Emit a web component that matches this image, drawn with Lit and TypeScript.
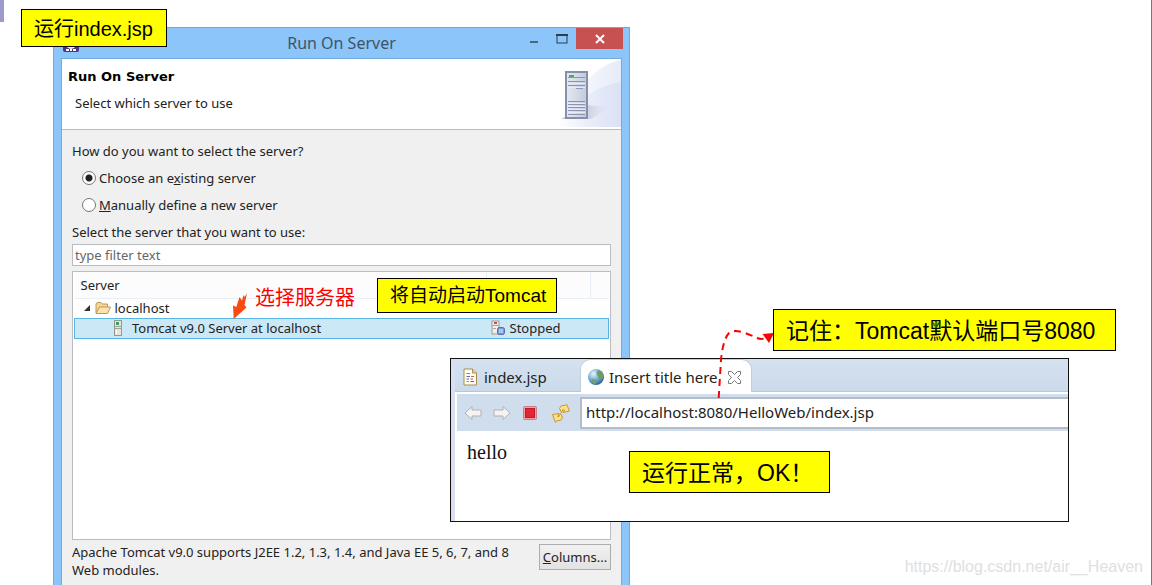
import { LitElement, html, svg, css } from "lit";
import { customElement, property, state } from "lit/decorators.js";

const serverArt = html`<svg width="78" height="70" viewBox="0 0 78 70" aria-hidden="true">
  <defs>
    <linearGradient id="sweep" x1="0" x2="1"><stop offset=".2" stop-color="#fff"/><stop offset="1" stop-color="#e6ebf8"/></linearGradient>
    <linearGradient id="sweep2" x1="0" x2="1"><stop offset=".2" stop-color="#e4eaf8" stop-opacity="0"/><stop offset="1" stop-color="#dbe2f6"/></linearGradient>
    <linearGradient id="case" x1="0" x2="1"><stop offset="0" stop-color="#e6e9f1"/><stop offset="1" stop-color="#c2cbdc"/></linearGradient>
    <linearGradient id="shade" x1="0" x2="1"><stop offset=".4" stop-color="#aaa3b8"/><stop offset="1" stop-color="#d8d8ea" stop-opacity="0"/></linearGradient>
  </defs>
  <path d="M0 68C20 60 30 38 44 22C54 10 66 3 78 1V68Z" fill="url(#sweep)"/>
  <path d="M0 68C26 60 40 28 78 23V68Z" fill="url(#sweep2)"/>
  <path d="M18 60L44 46L68 48L48 60Z" fill="url(#shade)" opacity=".6"/>
  <rect x="23" y="13" width="21" height="46" fill="url(#case)" stroke="#8590ac" stroke-width="2"/>
  <path d="M25 18.500H42M25 22.500H42M25 26.500H42M25 42.500H42M25 45.500H42M25 48.500H42M25 51.500H42M25 55.500H42" stroke="#8c94b4" stroke-width="1"/>
  <path d="M25 24.500H42M25 28.500H42M25 44.500H42M25 47.500H42M25 50.500H42M25 53.500H42" stroke="#e8ebf3"/>
  <path d="M26 17H31" stroke="#45b04d" stroke-width="2"/>
  <path d="M33 29.500H40" stroke="#8d9ac0"/>
</svg>`;

const folderIcon = html`<svg width="16" height="14" viewBox="0 0 16 14" aria-hidden="true">
  <path d="M1 12V3L2 1.500H6L7.500 3H12.500V6" fill="#f3d694" stroke="#c2955a"/>
  <path d="M1 12.500L4.500 6H15.500L12.500 12.500Z" fill="#fbe4ae" stroke="#c2955a" stroke-linejoin="round"/>
</svg>`;

const hostIcon = html`<svg width="10" height="16" viewBox="0 0 10 16" aria-hidden="true">
  <rect x="1.500" y=".5" width="7" height="15" fill="#e3e5d8" stroke="#95988e"/>
  <path d="M2 6.500H8M2 8.500H8" stroke="#a2a59a"/><rect x="3" y="2" width="3" height="3" fill="#37a45c"/>
  <path d="M3.500 10V14" stroke="#fff"/>
</svg>`;

const stoppedIcon = html`<svg width="15" height="16" viewBox="0 0 15 16" aria-hidden="true">
  <rect x="1" y="1" width="7" height="13" fill="#f0eee8" stroke="#a09a92"/>
  <path d="M1 5.500H8M2 8.500H5" stroke="#a9a6a0"/><path d="M3 3H6" stroke="#d04a4a" stroke-width="2"/>
  <rect x="6.500" y="7.500" width="7" height="7" rx="2" fill="#7a9bd2" stroke="#4a6cae"/>
  <path d="M8 10H12M8 12H12" stroke="#e4ecfa"/>
</svg>`;

const pageIcon = html`<svg width="15" height="18" viewBox="0 0 15 18" aria-hidden="true">
  <path d="M1 1H9.500L13.500 5V17H1Z" fill="#fffdf2" stroke="#a88d4d"/>
  <path d="M9.500 1V5H13.500" fill="#e8d59b" stroke="#a88d4d"/>
  <path d="M3.500 5.500H7M8 8.500H11" stroke="#d8586c"/><path d="M3.500 8.500H7M3.500 11H6M7.500 13.500H11" stroke="#4d72c4"/>
  <path d="M7.500 11H10" stroke="#d8586c"/><path d="M3.500 13.500H6" stroke="#7d95c8"/>
</svg>`;

const globeIcon = html`<svg width="18" height="18" viewBox="0 0 18 18" aria-hidden="true">
  <defs><radialGradient id="sea" cx=".35" cy=".3" r=".75"><stop offset="0" stop-color="#e8f5fb"/><stop offset=".5" stop-color="#7ab0d8"/><stop offset="1" stop-color="#2a5f9a"/></radialGradient></defs>
  <circle cx="9" cy="9" r="8" fill="url(#sea)"/>
  <path d="M11 2.500C13 2.500 15 4 16 7C16.500 10 14.500 12.500 13 11.500C11 10.500 12 8.500 10.500 7.500C9 6 9.500 3.500 11 2.500Z" fill="#6d9f5c"/>
  <path d="M5 11C7 10.500 10 12 9.500 14C9 15.500 8 16.500 7 16C5.500 15 4 13 5 11Z" fill="#6ea566"/>
</svg>`;

const closeTabIcon = html`<svg width="15" height="15" viewBox="0 0 15 15" aria-hidden="true">
  <path d="M1.500 1.500H4.500L7.500 4.500L10.500 1.500H13.500V4.500L10.500 7.500L13.500 10.500V13.500H10.500L7.500 10.500L4.500 13.500H1.500V10.500L4.500 7.500L1.500 4.500Z" fill="#fff" stroke="#7a7a7a"/>
</svg>`;

const backIcon = html`<svg width="18" height="16" viewBox="0 0 18 16" aria-hidden="true">
  <path d="M1 8L8 1.500V5H17V11H8V14.500Z" fill="#f4f4f2" stroke="#b1b1b1" stroke-linejoin="round"/>
</svg>`;
const forwardIcon = html`<svg width="18" height="16" viewBox="0 0 18 16" aria-hidden="true">
  <path d="M17 8L10 1.500V5H1V11H10V14.500Z" fill="#f4f4f2" stroke="#b1b1b1" stroke-linejoin="round"/>
</svg>`;
const stopIcon = html`<svg width="16" height="16" viewBox="0 0 16 16" aria-hidden="true">
  <rect x="1.500" y="1.500" width="13" height="13" rx="1" fill="#eda3a8" stroke="#c0838e"/>
  <rect x="3.500" y="3.500" width="9" height="9" fill="#e02835" stroke="#cc1524"/>
</svg>`;
const refreshIcon = html`<svg width="20" height="20" viewBox="0 0 20 20" aria-hidden="true">
  <path d="M10.500 9.500L8.500 5.500L10.500 2.500L14 2.500L15.500 1L18.500 8L12 9.500L13.500 7L12 6.500Z" fill="#fbe08e" stroke="#cd962f" stroke-linejoin="round"/>
  <path d="M9.500 10.500L11.500 14L9.500 17.500L6 17.500L4.500 19.500L1.500 11.500L8 10.500L6.500 13.500L8 13.500Z" fill="#fbe08e" stroke="#cd962f" stroke-linejoin="round"/>
</svg>`;

@customElement("server-dialog")
class ServerDialog extends LitElement {
  @state() private mode = "existing";

  static styles = css`
    :host { display: flex; flex-direction: column; box-sizing: border-box; background: #8cc5f9; border: 1px solid #6faade; border-bottom: 0; padding: 0 7px; font: 13px/18px "Noto Sans", sans-serif; color: #222; }
    * { box-sizing: border-box; }
    .titlebar { flex: none; height: 30px; display: grid; grid-template-columns: 1fr auto 1fr; align-items: center; }
    .app-icon { width: 16px; height: 16px; margin-left: 2px; margin-top: 2px; }
    .title { margin: 0; text-align: center; font-size: 16px; line-height: 30px; font-weight: 400; color: #3f5468; }
    .controls { display: flex; align-self: flex-start; justify-content: flex-end; margin-right: -1px; }
    .ctl { width: 28px; height: 21px; padding: 0; border: 0; background: none; display: grid; place-items: center; }
    .close { width: 47px; background: #c75050; }
    .panel { flex: 1; min-height: 0; display: flex; flex-direction: column; background: #f0f0f0; border: 1px solid #72acdf; border-bottom: 0; }
    .banner { flex: none; display: flex; justify-content: space-between; height: 71px; background: #fff; border-bottom: 1px solid #bcbcbc; }
    .banner-text { padding: 8px 6px; }
    .banner h2 { margin: 0; font: 700 13px/20px "DejaVu Sans", sans-serif; color: #000; }
    .banner p { margin: 7px 0 0 7px; }
    .body { flex: 1; min-height: 0; display: flex; flex-direction: column; padding: 12px 10px 6px; }
    .choices { border: 0; margin: 0; padding: 0; display: grid; gap: 9px; }
    .choices legend { padding: 0; margin-bottom: 9px; }
    .choice { display: flex; align-items: center; gap: 3px; padding-left: 10px; }
    .choice input { appearance: none; width: 14px; height: 14px; margin: 0; border: 1px solid #767676; border-radius: 50%; background: #fff; }
    .choice input:checked { background: radial-gradient(circle, #222 0 3px, #fff 4px); }
    .filter-label { margin-top: 9px; }
    .filter { flex: none; width: 100%; height: 22px; margin: 3px 0 5px; border: 1px solid #b9bdc2; padding: 0 2px; font: inherit; background: #fff; }
    .filter::placeholder { color: #666; opacity: 1; }
    .tree { flex: 1; min-height: 0; background: #fff; border: 1px solid #b9bdc2; padding: 0 1px; }
    table { width: 100%; border-collapse: collapse; table-layout: fixed; }
    th { height: 26px; padding: 0 6px; font-weight: 400; text-align: left; background: #fcfcfc; border-right: 1px solid #e9eff7; border-bottom: 1px solid #e9eff7; }
    th:last-child { border-right: 0; }
    .col-state { width: 104px; } .col-rest { width: 18px; }
    td { height: 20px; padding: 0; white-space: nowrap; }
    .cell { display: flex; align-items: center; gap: 4px; line-height: 18px; padding-left: 8px; }
    .leaf .cell { padding-left: 38px; gap: 9px; }
    .leaf .cell.status { padding-left: 4px; gap: 4px; }
    .leaf td { background: #cbe8f6; border: solid #58b4e0; border-width: 1px 0; }
    .leaf td:first-child { border-left-width: 1px; }
    .leaf td:last-child { border-right-width: 1px; }
    .footer { flex: none; display: flex; justify-content: space-between; align-items: flex-start; padding-top: 3px; }
    .footer p { margin: 0; width: 460px; }
    .columns { width: 72px; height: 26px; margin-top: 1px; padding: 0; border: 1px solid #adadad; background: linear-gradient(#f1f1f1, #e2e2e2); font: inherit; color: inherit; }
  `;

  render() {
    return html`
      <header class="titlebar">
        <svg class="app-icon" viewBox="0 0 16 16" aria-hidden="true"><rect width="16" height="16" rx="2" fill="#4d3285"/><circle cx="8" cy="8" r="5" fill="#eee"/><path d="M3 13H6V15H3ZM7 13H9V15H7ZM10 13H13V15H10Z" fill="#fff"/></svg>
        <h1 class="title">Run On Server</h1>
        <div class="controls">
          <button class="ctl" aria-label="Minimize"><svg width="10" height="10"><path d="M1 8H9" stroke="#48677f" stroke-width="2"/></svg></button>
          <button class="ctl" aria-label="Maximize"><svg width="12" height="10"><rect x="1" y="1" width="10" height="8" fill="none" stroke="#2d3d4a"/><path d="M0 1H12" stroke="#2d3d4a" stroke-width="2"/></svg></button>
          <button class="ctl close" aria-label="Close"><svg width="10" height="10"><path d="M1 1L9 9M9 1L1 9" stroke="#fff" stroke-width="2"/></svg></button>
        </div>
      </header>
      <div class="panel">
        <div class="banner">
          <div class="banner-text"><h2>Run On Server</h2><p>Select which server to use</p></div>
          ${serverArt}
        </div>
        <div class="body">
          <fieldset class="choices">
            <legend>How do you want to select the server?</legend>
            <label class="choice"><input type="radio" name="mode" .checked=${this.mode === "existing"} @change=${() => (this.mode = "existing")}><span>Choose an e<u>x</u>isting server</span></label>
            <label class="choice"><input type="radio" name="mode" .checked=${this.mode === "new"} @change=${() => (this.mode = "new")}><span><u>M</u>anually define a new server</span></label>
          </fieldset>
          <label class="filter-label" for="filter">Select the server that you want to use:</label>
          <input class="filter" id="filter" type="text" placeholder="type filter text">
          <div class="tree">
            <table>
              <colgroup><col><col class="col-state"><col class="col-rest"></colgroup>
              <thead><tr><th>Server</th><th></th><th></th></tr></thead>
              <tbody>
                <tr><td colspan="3"><div class="cell"><svg width="8" height="8" aria-hidden="true"><path d="M7 1V7H1Z" fill="#333"/></svg>${folderIcon}<span>localhost</span></div></td></tr>
                <tr class="leaf"><td><div class="cell">${hostIcon}<span>Tomcat v9.0 Server at localhost</span></div></td><td colspan="2"><div class="cell status">${stoppedIcon}<span>Stopped</span></div></td></tr>
              </tbody>
            </table>
          </div>
          <div class="footer">
            <p>Apache Tomcat v9.0 supports J2EE 1.2, 1.3, 1.4, and Java EE 5, 6, 7, and 8 Web modules.</p>
            <button class="columns"><u>C</u>olumns...</button>
          </div>
        </div>
      </div>`;
  }
}

@customElement("browser-view")
class BrowserView extends LitElement {
  static styles = css`
    :host { display: block; box-sizing: border-box; border: 1px solid #111; background: #fff; font: 15px/20px "Noto Sans", sans-serif; color: #222; }
    * { box-sizing: border-box; }
    .frame { height: 100%; border-left: 4px solid #d9dff0; display: flex; flex-direction: column; }
    .tabs { flex: none; display: flex; height: 33px; background: linear-gradient(#d5e2ef, #cbdaeb); border-bottom: 1px solid #b9c6da; }
    .tab { display: flex; align-items: center; gap: 6px; height: 33px; padding: 2px 0 0 8px; border: 0; background: none; font: inherit; color: inherit; white-space: nowrap; }
    .plain { width: 125px; }
    .active { gap: 4px; padding: 2px 9px 0 6px; background: #fff; border: 1px solid #c1cddd; border-bottom: 0; border-radius: 10px 10px 0 0; }
    .active .x { margin-left: 5px; display: flex; }
    .toolbar { flex: none; display: flex; align-items: center; height: 37px; margin: 2px 0 0 2px; padding-left: 7px; background: #cfdded; }
    .tool { width: 29px; height: 24px; padding: 0; border: 0; background: none; display: flex; align-items: center; justify-content: flex-start; }
    .address { flex: 1; min-width: 0; height: 32px; padding: 0 4px 2px; border: 2px solid #b4bcc8; border-right: 0; background: #fff; font: inherit; color: inherit; }
    .page { margin: 0; padding: 10px 12px; font: 20px/22px "Liberation Serif", serif; color: #111; }
  `;

  render() {
    return html`<div class="frame">
      <div class="tabs" role="tablist">
        <button class="tab plain" role="tab" aria-selected="false">${pageIcon}index.jsp</button>
        <button class="tab active" role="tab" aria-selected="true">${globeIcon}Insert title here<span class="x">${closeTabIcon}</span></button>
      </div>
      <div class="toolbar">
        <button class="tool" aria-label="Back">${backIcon}</button>
        <button class="tool" aria-label="Forward">${forwardIcon}</button>
        <button class="tool" aria-label="Stop">${stopIcon}</button>
        <button class="tool" aria-label="Refresh">${refreshIcon}</button>
        <input class="address" type="text" aria-label="Address" value="http://localhost:8080/HelloWeb/index.jsp">
      </div>
      <p class="page">hello</p>
    </div>`;
  }
}

@customElement("note-box")
class NoteBox extends LitElement {
  @property() text = "";
  static styles = css`
    :host { display: block; box-sizing: border-box; padding: 0 12px; border: 1px solid #000; background: #ff0; color: #000; white-space: nowrap; font-family: "Liberation Sans", "Noto Sans CJK SC", sans-serif; }
  `;
  render() {
    return html`${this.text}`;
  }
}

@customElement("app-root")
class AppRoot extends LitElement {
  static styles = css`
    :host { display: block; }
    .slide { position: relative; box-sizing: border-box; height: 100vh; overflow: hidden; background: #fff; border-right: 1px solid #777; }
    .accent { width: 4px; height: 22px; background: #9c99cc; }
    .dialog { position: absolute; left: 53px; top: 27px; bottom: 0; width: 577px; }
    .browser { position: absolute; left: 450px; top: 358px; width: 619px; height: 164px; }
    .note { position: absolute; }
    .run { left: 21px; top: 9px; width: 146px; font-size: 20px; line-height: 38px; }
    .auto { left: 377px; top: 278px; width: 180px; font-size: 19px; line-height: 33px; }
    .port { left: 773px; top: 309px; width: 343px; font-size: 23px; line-height: 42px; }
    .ok { left: 629px; top: 451px; width: 201px; font-size: 23px; line-height: 42px; }
    .run { height: 38px; }
    .auto { height: 35px; }
    .port, .ok { height: 42px; }
    .pick { position: absolute; left: 255px; top: 285px; margin: 0; color: #f00; font: 20px/26px "Liberation Sans", "Noto Sans CJK SC", sans-serif; }
    .ink { position: absolute; left: 0; top: 0; pointer-events: none; }
    .mark { position: absolute; right: 8px; bottom: 8px; margin: 0; color: #e0e0e0; font: 16px/20px "Liberation Sans", sans-serif; }
  `;

  render() {
    return html`<main class="slide">
      <div class="accent"></div>
      <server-dialog class="dialog"></server-dialog>
      <browser-view class="browser"></browser-view>
      <svg class="ink" width="1120" height="560" aria-hidden="true">
        ${svg`<path d="M718.700 398L721 360C722 348 725 337 729 333C735 328 748 334 755 337C760 340 764 339 768 337" fill="none" stroke="#f00" stroke-width="2" stroke-dasharray="7 5"/>
        <path d="M762.500 334L774 333L769 343Z" fill="#f00"/>
        <path d="M233.700 319L233 305.500L236.300 307L239.500 297L242 300.500L243.500 295L244.500 297L247 293.500L244.500 305L246.500 307.500Z" fill="#fa4a10"/>`}
      </svg>
      <p class="pick">选择服务器</p>
      <note-box class="note run" text="运行index.jsp"></note-box>
      <note-box class="note auto" text="将自动启动Tomcat"></note-box>
      <note-box class="note port" text="记住：Tomcat默认端口号8080"></note-box>
      <note-box class="note ok" text="运行正常，OK！"></note-box>
      <p class="mark">https://blog.csdn.net/air__Heaven</p>
    </main>`;
  }
}
